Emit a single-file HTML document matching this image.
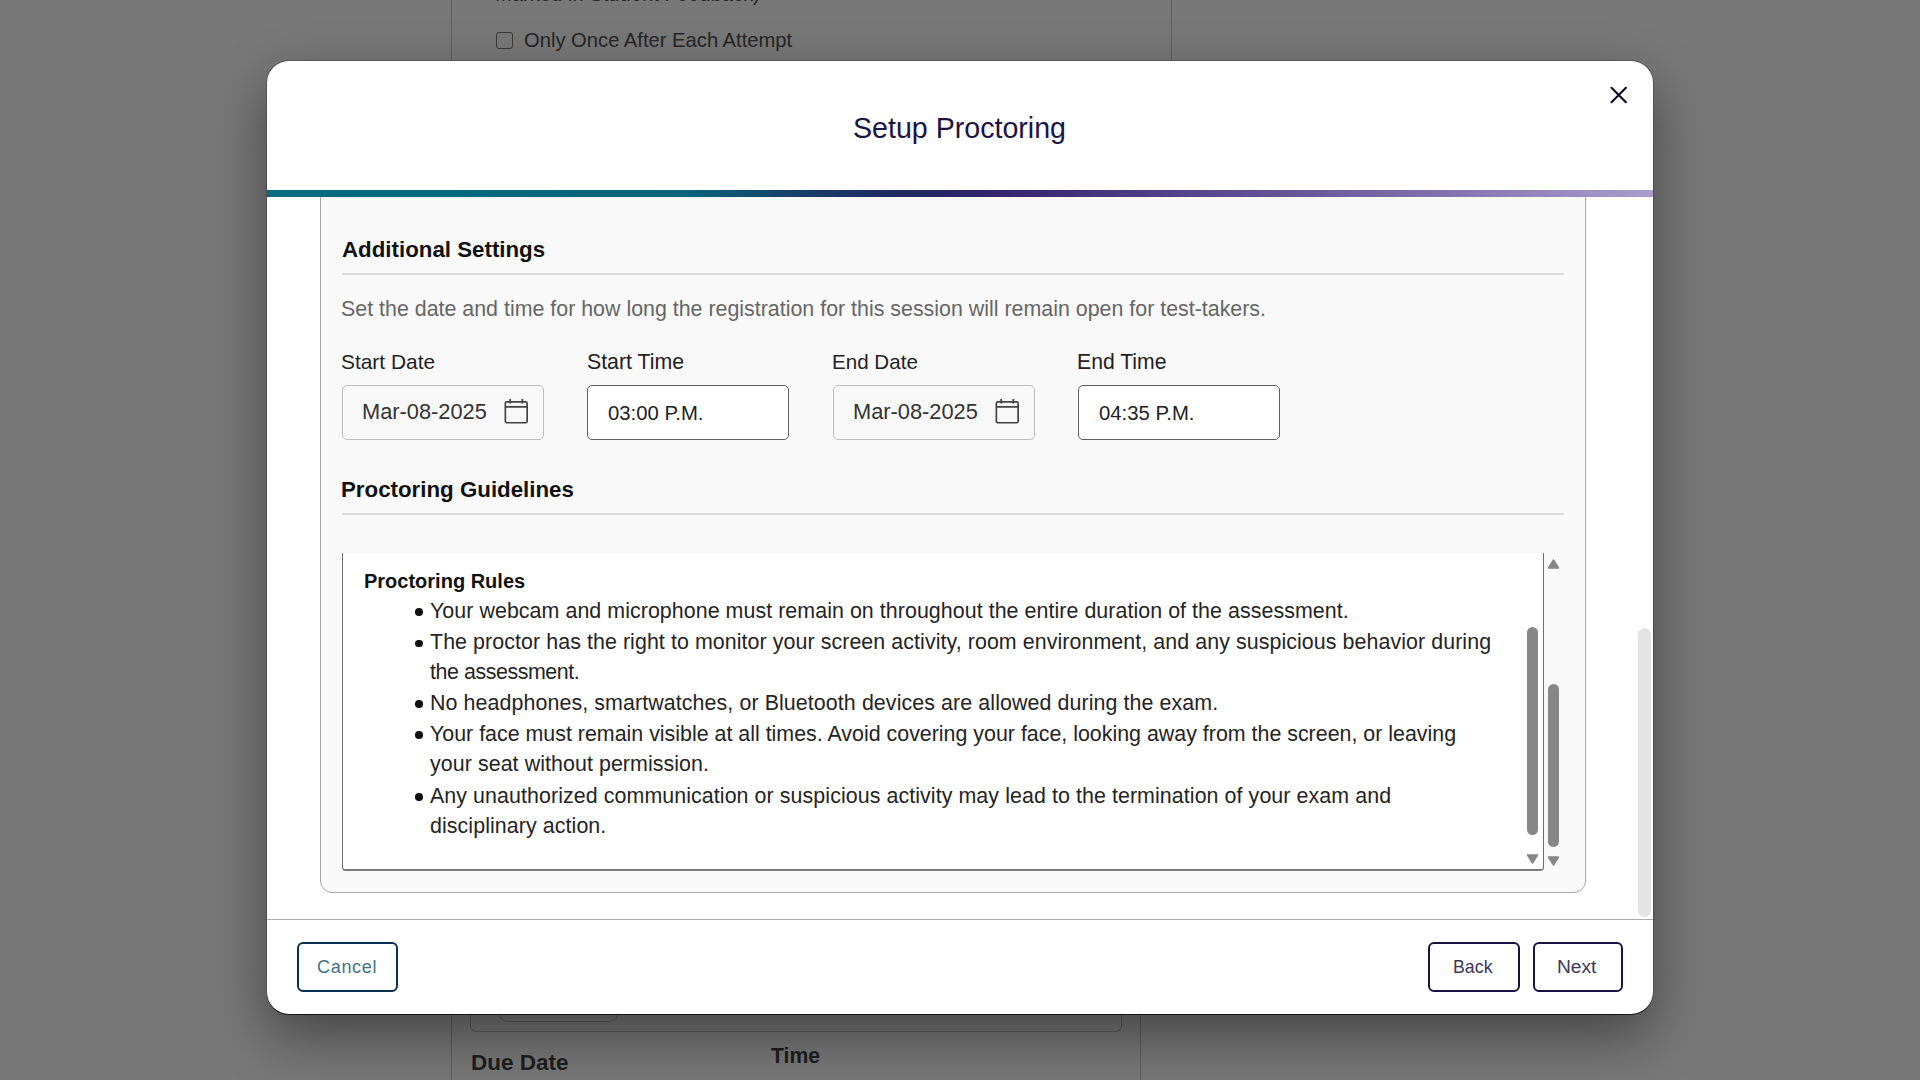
<!DOCTYPE html>
<html>
<head>
<meta charset="utf-8">
<style>
*{box-sizing:border-box;margin:0;padding:0}
html,body{width:1920px;height:1080px;overflow:hidden}
body{background:#787878;font-family:"Liberation Sans",sans-serif;position:relative}
.a{position:absolute;white-space:nowrap}
.t{position:absolute;white-space:nowrap;line-height:1}
/* background page */
.bgline{position:absolute;width:1px;background:#5f5f5f}
#modal{position:absolute;left:267px;top:61px;width:1386px;height:953px;background:#fff;border-radius:22px;
  box-shadow:0 0 0 1px rgba(0,0,0,.18),0 1px 0 0 rgba(0,0,0,.7),0 22px 55px rgba(0,0,0,.42);overflow:hidden}
#bar{position:absolute;left:0;top:129px;width:1386px;height:7px;
  background:linear-gradient(90deg,#076a80 0%,#07657b 30%,#17406a 38%,#1f2a60 45%,#31246a 52%,#4a3a80 62%,#6a579a 75%,#8b7ab4 88%,#ab9dcf 100%)}
#panel{position:absolute;left:53px;top:-20px;width:1266px;height:716px;background:#f9f9f9;border:1px solid #a8a8a8;border-radius:0 0 12px 12px}
.hr{position:absolute;height:2px;background:#dcdcdc}
.inp{position:absolute;top:385px;width:201.5px;height:55px;border-radius:5px}
.date{background:#f8f8f8;border:1px solid #bdbdbd}
.time{background:#fff;border:1px solid #5f5f5f}
#ta{position:absolute;left:342px;top:553px;width:1202px;height:318px;background:#fff;border-radius:0 0 4px 4px;border-left:1px solid #6e6e6e;border-right:1px solid #6e6e6e;border-bottom:2px solid #7a7a7a}
.thumb{position:absolute;background:#878787;border-radius:6px}
.dot{position:absolute;left:415.4px;width:7.6px;height:7.6px;border-radius:50%;background:#111}
.btn{position:absolute;top:942px;height:50px;border-radius:6px;background:#fff}
</style>
</head>
<body>
<!-- background page -->
<div class="bgline" style="left:451px;top:0;height:1080px"></div>
<div class="bgline" style="left:1171px;top:0;height:80px"></div>
<div class="bgline" style="left:1140px;top:1000px;height:80px"></div>
<div class="t" style="left:495px;top:-16px;font-size:20.2px;color:#262626">Marked in Student Feedback)</div>
<div class="a" style="left:496px;top:32px;width:17px;height:17px;border:1.5px solid #3a3a3a;border-radius:3px"></div>
<div class="t" style="left:524px;top:30px;font-size:20.2px;color:#262626">Only Once After Each Attempt</div>
<div class="a" style="left:470px;top:990px;width:652px;height:42px;border:1px solid #5e5e5e;border-top:none;border-radius:0 0 6px 6px"></div>
<div class="a" style="left:497px;top:990px;width:123px;height:32px;border:1px solid #5e5e5e;border-top:none;border-radius:0 0 12px 12px"></div>
<div class="t" style="left:471px;top:1052px;font-size:22.5px;font-weight:700;color:#1e1e1e">Due Date</div>
<div class="t" style="left:771px;top:1045px;font-size:21.2px;font-weight:700;color:#1e1e1e">Time</div>

<div id="modal">
  <div class="t" style="left:586px;top:53px;font-size:28.6px;color:#1b1446">Setup Proctoring</div>
  <svg class="a" style="left:1340px;top:23px" width="22" height="22" viewBox="0 0 22 22"><path d="M4.5 3.8L18.9 18.2M18.9 3.8L4.5 18.2" stroke="#0e0a2c" stroke-width="2.1" stroke-linecap="round"/></svg>
  <div id="bar"></div>
  <div style="position:absolute;left:0;top:136px;width:1386px;height:722px;overflow:hidden"><div id="panel"></div></div>
  <div class="a" style="left:1371px;top:567px;width:13px;height:289px;background:#e4e4e4;border-radius:7px"></div>
  <div class="a" style="left:0;top:858px;width:1386px;height:1px;background:#ababab"></div>
</div>

<!-- panel content (page coordinates) -->
<div class="t" style="left:342px;top:239px;font-size:22.3px;font-weight:700;color:#111">Additional Settings</div>
<div class="hr" style="left:342px;top:273px;width:1222px"></div>
<div class="t" style="left:341px;top:299px;font-size:21.4px;color:#666">Set the date and time for how long the registration for this session will remain open for test-takers.</div>

<div class="t" style="left:341px;top:352px;font-size:20.9px;color:#222">Start Date</div>
<div class="t" style="left:587px;top:352px;font-size:21.3px;color:#222">Start Time</div>
<div class="t" style="left:832px;top:352px;font-size:20.6px;color:#222">End Date</div>
<div class="t" style="left:1077px;top:351px;font-size:21.2px;color:#222">End Time</div>

<div class="inp date" style="left:342px"></div>
<div class="inp time" style="left:587px"></div>
<div class="inp date" style="left:833px"></div>
<div class="inp time" style="left:1078px"></div>

<div class="t" style="left:362px;top:401px;font-size:21.8px;color:#333">Mar-08-2025</div>
<div class="t" style="left:608px;top:403px;font-size:20.3px;color:#222">03:00 P.M.</div>
<div class="t" style="left:853px;top:401px;font-size:21.8px;color:#333">Mar-08-2025</div>
<div class="t" style="left:1099px;top:403px;font-size:20.3px;color:#222">04:35 P.M.</div>

<svg class="a" style="left:503px;top:397px" width="27" height="28" viewBox="0 0 27 28"><rect x="2.35" y="4.95" width="21.8" height="20.8" rx="1.5" fill="none" stroke="#444" stroke-width="1.7"/><path d="M2.35 9.9H24.15M7.2 2V6.5M19.3 2V6.5" stroke="#444" stroke-width="1.7"/></svg>
<svg class="a" style="left:994px;top:397px" width="27" height="28" viewBox="0 0 27 28"><rect x="2.35" y="4.95" width="21.8" height="20.8" rx="1.5" fill="none" stroke="#444" stroke-width="1.7"/><path d="M2.35 9.9H24.15M7.2 2V6.5M19.3 2V6.5" stroke="#444" stroke-width="1.7"/></svg>

<div class="t" style="left:341px;top:479px;font-size:22.3px;font-weight:700;color:#111">Proctoring Guidelines</div>
<div class="hr" style="left:342px;top:513px;width:1222px"></div>

<div id="ta"></div>
<div class="t" style="left:364px;top:571px;font-size:20px;font-weight:700;color:#111">Proctoring Rules</div>
<div id="rules" style="position:absolute;left:0;top:0;font-size:21.4px;color:#242424">
  <div class="dot" style="top:608.3px"></div>
  <div class="t" style="left:430px;top:601px;letter-spacing:0.056px">Your webcam and microphone must remain on throughout the entire duration of the assessment.</div>
  <div class="dot" style="top:639.6px"></div>
  <div class="t" style="left:430px;top:632px;letter-spacing:0.073px">The proctor has the right to monitor your screen activity, room environment, and any suspicious behavior during</div>
  <div class="t" style="left:430px;top:662px;letter-spacing:-0.43px">the assessment.</div>
  <div class="dot" style="top:700.3px"></div>
  <div class="t" style="left:430px;top:693px;letter-spacing:0.091px">No headphones, smartwatches, or Bluetooth devices are allowed during the exam.</div>
  <div class="dot" style="top:731.1px"></div>
  <div class="t" style="left:430px;top:724px;letter-spacing:0px">Your face must remain visible at all times. Avoid covering your face, looking away from the screen, or leaving</div>
  <div class="t" style="left:430px;top:754px;letter-spacing:0.071px">your seat without permission.</div>
  <div class="dot" style="top:793px"></div>
  <div class="t" style="left:430px;top:786px;letter-spacing:0.077px">Any unauthorized communication or suspicious activity may lead to the termination of your exam and</div>
  <div class="t" style="left:430px;top:816px;letter-spacing:0.079px">disciplinary action.</div>
</div>

<!-- scrollbars -->
<div class="thumb" style="left:1527px;top:627px;width:11px;height:208px"></div>
<svg class="a" style="left:1526px;top:853px" width="13" height="12" viewBox="0 0 13 12"><path d="M1.5 2H11.5L6.5 10Z" fill="#878787" stroke="#878787" stroke-width="1.5" stroke-linejoin="round"/></svg>
<svg class="a" style="left:1547px;top:558px" width="13" height="12" viewBox="0 0 13 12"><path d="M1.5 10H11.5L6.5 2Z" fill="#878787" stroke="#878787" stroke-width="1.5" stroke-linejoin="round"/></svg>
<div class="thumb" style="left:1548px;top:684px;width:11px;height:163px"></div>
<svg class="a" style="left:1547px;top:855px" width="13" height="12" viewBox="0 0 13 12"><path d="M1.5 2H11.5L6.5 10Z" fill="#878787" stroke="#878787" stroke-width="1.5" stroke-linejoin="round"/></svg>

<!-- footer buttons -->
<div class="btn" style="left:297px;width:101px;border:2.2px solid #0b3150"></div>
<div class="t" style="left:317px;top:958px;font-size:18px;letter-spacing:0.7px;color:#3f7289">Cancel</div>
<div class="btn" style="left:1428px;width:92px;border:2.2px solid #1a1240"></div>
<div class="t" style="left:1453px;top:959px;font-size:17.8px;color:#3d3858">Back</div>
<div class="btn" style="left:1533px;width:90px;border:2.2px solid #1a1240"></div>
<div class="t" style="left:1557px;top:957px;font-size:19.2px;color:#3d3858">Next</div>
</body>
</html>
